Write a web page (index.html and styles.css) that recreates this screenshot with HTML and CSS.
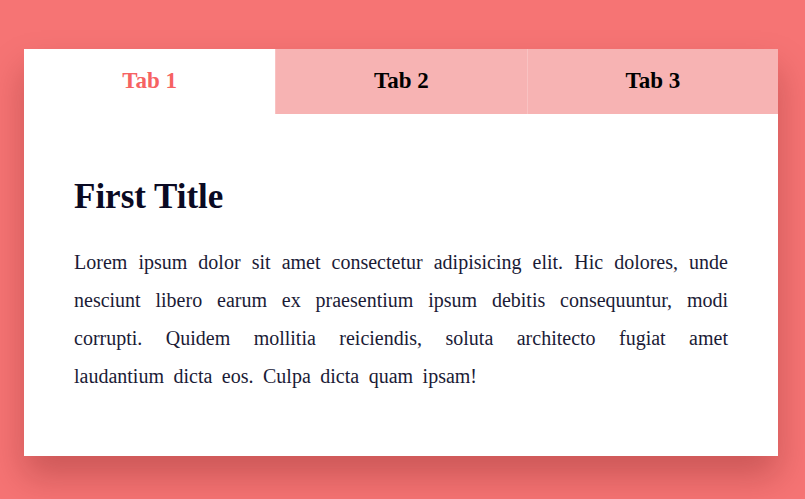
FILE: index.html
```html
<!DOCTYPE html>
<html lang="en">
<head>
<meta charset="utf-8">
<title>Tabs</title>
<link rel="stylesheet" href="styles.css">
</head>
<body>
<div class="page">
  <div class="card">
    <div class="tabs">
      <div class="tab active">Tab 1</div>
      <div class="tab">Tab 2</div>
      <div class="tab">Tab 3</div>
    </div>
    <div class="content">
      <h1 class="title">First Title</h1>
      <p class="text">Lorem ipsum dolor sit amet consectetur adipisicing elit. Hic dolores, unde nesciunt libero earum ex praesentium ipsum debitis consequuntur, modi corrupti. Quidem mollitia reiciendis, soluta architecto fugiat amet laudantium dicta eos. Culpa dicta quam ipsam!</p>
    </div>
  </div>
</div>
</body>
</html>
```
FILE: styles.css
```css
html, body {
  margin: 0;
  padding: 0;
}
body {
  background: #f67474;
  font-family: "Liberation Serif", "Times New Roman", serif;
  height: 499px;
  overflow: hidden;
}
.page {
  padding: 49px 27px 0 24px;
}
.card {
  background: #fff;
  height: 407px;
  box-shadow: 0 20px 34px rgba(90, 10, 10, 0.28);
}
.tabs {
  display: grid;
  grid-template-columns: 1fr 1fr 1fr;
  height: 65px;
}
.tab {
  display: flex;
  align-items: center;
  justify-content: center;
  padding-bottom: 2px;
  background: #f7b3b3;
  color: #000;
  font-weight: bold;
  font-size: 23px;
}
.tab + .tab {
  border-left: 1px solid #f9c2c2;
}
.tab.active {
  background: #fff;
  color: #f66262;
}
.content {
  padding: 0 50px;
}
.title {
  margin: 58px 0 0;
  font-size: 35px;
  line-height: 50px;
  color: #0a0a23;
}
.text {
  margin: 21px 0 0;
  font-size: 20px;
  line-height: 38px;
  word-spacing: 4.5px;
  text-align: justify;
  color: #1b1b36;
}
```
